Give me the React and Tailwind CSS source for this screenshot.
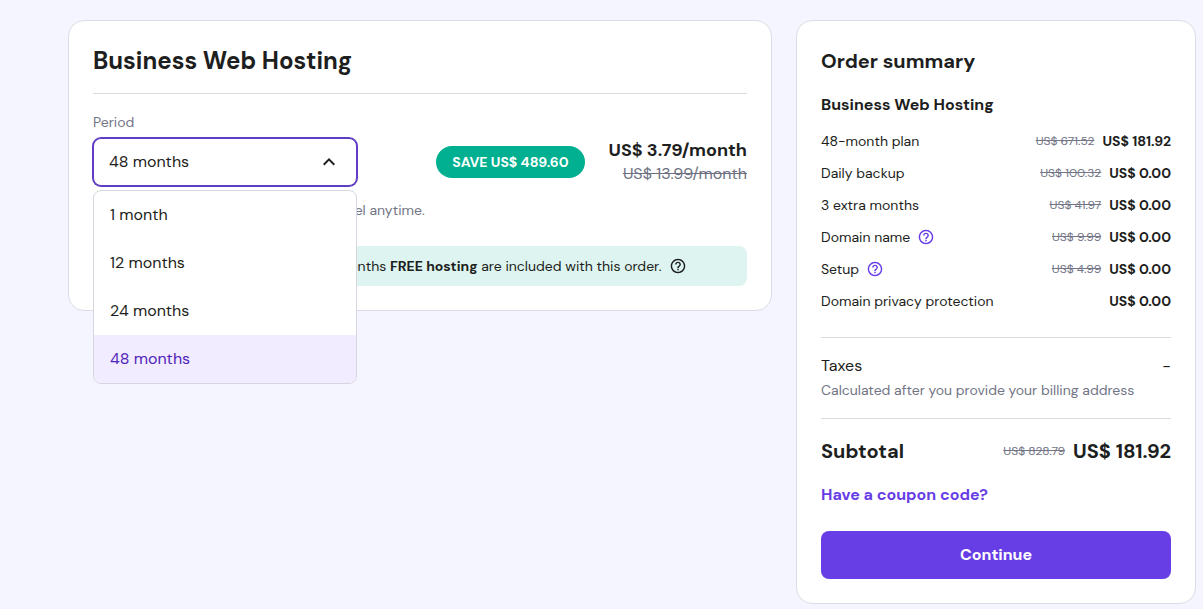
import { useState } from 'react';
import { MdExpandLess, MdExpandMore, MdHelpOutline } from 'react-icons/md';
import clsx from 'clsx';

const PERIODS = ['1 month', '12 months', '24 months', '48 months'];

const ITEMS = [
    { label: '48-month plan', old: 'US$ 671.52', price: 'US$ 181.92' },
    { label: 'Daily backup', old: 'US$ 100.32', price: 'US$ 0.00' },
    { label: '3 extra months', old: 'US$ 41.97', price: 'US$ 0.00' },
    { label: 'Domain name', old: 'US$ 9.99', price: 'US$ 0.00', help: true },
    { label: 'Setup', old: 'US$ 4.99', price: 'US$ 0.00', help: true },
    { label: 'Domain privacy protection', price: 'US$ 0.00' },
];

const HelpButton = ({ label, className }) => (
    <button type="button" aria-label={label} className={clsx('shrink-0', className)}>
        <MdHelpOutline viewBox="1 1 22 22" className="size-4" />
    </button>
);

const PeriodSelect = ({ value, onChange }) => {
    const [open, setOpen] = useState(true);
    const Chevron = open ? MdExpandLess : MdExpandMore;

    const pick = (period) => {
        onChange(period);
        setOpen(false);
    };

    return (
        <div className="w-[264px]">
            <label htmlFor="period" className="mb-1 block text-sm/6 text-[#727586]">Period</label>
            <div className="relative">
                <select
                    id="period"
                    value={value}
                    onChange={(e) => pick(e.target.value)}
                    onMouseDown={(e) => {
                        e.preventDefault();
                        setOpen(!open);
                    }}
                    className="block h-12 w-full appearance-none rounded-lg border border-[#5f3dc4] bg-white px-[15px] text-base text-[#1d1e20] ring-1 ring-[#5f3dc4] outline-none"
                >
                    {PERIODS.map((period) => (
                        <option key={period}>{period}</option>
                    ))}
                </select>
                <Chevron className="pointer-events-none absolute top-3 right-4 size-6 text-[#1d1e20]" />

                {open && (
                    <ul className="absolute top-full left-0 z-10 mt-1 w-full overflow-hidden rounded-lg border border-[#d5d6e0] bg-white">
                        {PERIODS.map((period) => (
                            <li key={period}>
                                <button
                                    type="button"
                                    onClick={() => pick(period)}
                                    className={clsx(
                                        'h-12 w-full px-4 text-left text-base',
                                        period === value ? 'bg-[#f1ecff] text-[#5025b8]' : 'text-[#1d1e20]'
                                    )}
                                >
                                    {period}
                                </button>
                            </li>
                        ))}
                    </ul>
                )}
            </div>
        </div>
    );
};

const PlanCard = () => {
    const [period, setPeriod] = useState('48 months');

    return (
        <section className="min-w-0 flex-1 rounded-2xl border border-[#dadce8] bg-white p-6">
            <h1 className="border-b border-[#dadce0] pb-4 text-2xl/8 font-bold">Business Web Hosting</h1>

            <div className="mt-4 flex items-end justify-between">
                <PeriodSelect value={period} onChange={setPeriod} />
                <div className="flex items-center gap-6">
                    <span className="rounded-full bg-[#00b090] px-4 py-1 text-sm/6 font-bold text-white">SAVE US$ 489.60</span>
                    <div className="text-right">
                        <p className="text-lg/6 font-bold">US$ 3.79/month</p>
                        <p className="text-base/6 text-[#6d7081] line-through">US$ 13.99/month</p>
                    </div>
                </div>
            </div>

            <p className="mt-3 text-sm/6 text-[#727586]">Plan renews for US$ 13.99 a month. Cancel anytime.</p>

            <div className="mt-6 flex items-center gap-2 rounded-lg bg-[#def4f0] px-4 py-2 text-sm/6">
                <p>
                    Great news! Your <b>FREE domain</b> + 3 months <b>FREE hosting</b> are included with this order.
                </p>
                <HelpButton label="About included months" />
            </div>
        </section>
    );
};

const OrderSummary = () => (
    <aside className="w-[400px] shrink-0 rounded-2xl border border-[#dadce8] bg-white p-6">
        <h2 className="text-xl/8 font-bold">Order summary</h2>
        <h3 className="mt-4 text-base/6 font-bold">Business Web Hosting</h3>

        <ul className="mt-3 space-y-2 border-b border-[#dadce0] pb-6 text-sm/6">
            {ITEMS.map((item) => (
                <li key={item.label} className="flex items-center justify-between">
                    <span className="flex items-center gap-2">
                        {item.label}
                        {item.help && <HelpButton label={`About ${item.label}`} className="text-[#673de6]" />}
                    </span>
                    <span className="flex items-center gap-2">
                        {item.old && <s className="text-xs text-[#727586]">{item.old}</s>}
                        <b>{item.price}</b>
                    </span>
                </li>
            ))}
        </ul>

        <div className="border-b border-[#dadce0] py-4">
            <p className="flex justify-between text-base/6">
                <span>Taxes</span>
                <span>-</span>
            </p>
            <p className="text-sm/6 text-[#727586]">Calculated after you provide your billing address</p>
        </div>

        <div className="mt-4 flex items-center justify-between text-xl/8 font-bold">
            <span>Subtotal</span>
            <span className="flex items-center gap-2">
                <s className="text-xs font-normal text-[#727586]">US$ 828.79</s>
                US$ 181.92
            </span>
        </div>

        <a href="#coupon" className="mt-4 block text-base/6 font-bold text-[#673de6]">Have a coupon code?</a>
        <button type="button" className="mt-6 h-12 w-full rounded-lg bg-[#673de6] text-base font-bold text-white">
            Continue
        </button>
    </aside>
);

const App = () => (
    <main className="flex min-h-screen items-start gap-6 bg-[#f5f5ff] pt-5 pr-[7px] pl-[68px] font-['DM_Sans','Inter',sans-serif] text-[#1d1e20]">
        <PlanCard />
        <OrderSummary />
    </main>
);

export default App;
